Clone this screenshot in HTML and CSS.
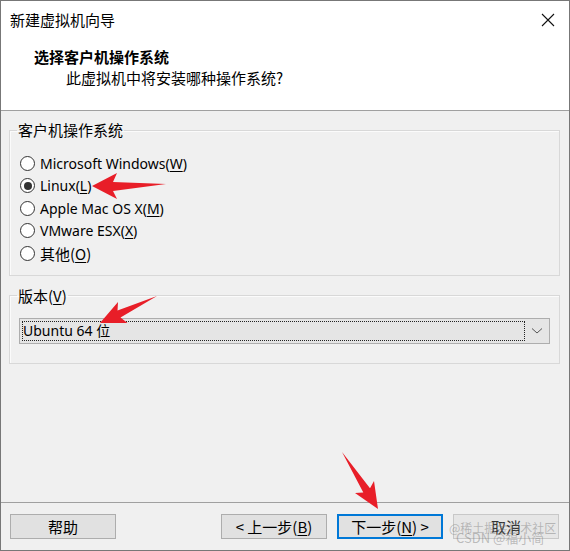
FILE: index.html
```html
<!DOCTYPE html>
<html lang="zh-CN">
<head>
<meta charset="utf-8">
<title>新建虚拟机向导</title>
<link rel="stylesheet" href="styles.css">
</head>
<body>
<div class="window">
  <div class="titlebar">
    <span class="title">新建虚拟机向导</span>
    <svg class="close" width="14" height="14" viewBox="0 0 14 14"><path d="M1 1 L13 13 M13 1 L1 13" stroke="#111" stroke-width="1.1" fill="none"/></svg>
  </div>
  <div class="header">
    <div class="h-title">选择客户机操作系统</div>
    <div class="h-sub">此虚拟机中将安装哪种操作系统?</div>
  </div>
  <div class="body">
    <fieldset class="group g1">
      <legend class="cjk">客户机操作系统</legend>
      <div class="radios">
        <div class="radio"><span class="dot"></span><span class="lat">Microsoft Windows(<u>W</u>)</span></div>
        <div class="radio"><span class="dot on"></span><span class="lat">Linux(<u>L</u>)</span></div>
        <div class="radio"><span class="dot"></span><span class="lat">Apple Mac OS X(<u>M</u>)</span></div>
        <div class="radio"><span class="dot"></span><span class="lat">VMware ESX(<u>X</u>)</span></div>
        <div class="radio"><span class="dot"></span><span class="cjk">其他(<u>O</u>)</span></div>
      </div>
    </fieldset>
    <fieldset class="group g2">
      <legend class="cjk">版本(<u>V</u>)</legend>
      <div class="select">
        <div class="sel-focus"><span class="lat">Ubuntu 64 位</span></div>
        <svg class="chev" width="12" height="8" viewBox="0 0 12 8"><path d="M1 1.5 L6 6 L11 1.5" stroke="#555" stroke-width="1" fill="none"/></svg>
      </div>
    </fieldset>
  </div>
  <div class="footer">
    <button class="btn">帮助</button>
    <div class="btn-group">
      <button class="btn">&lt; 上一步(<u>B</u>)</button>
      <button class="btn primary">下一步(<u>N</u>) &gt;</button>
      <button class="btn disabled">取消</button>
    </div>
  </div>
  <div class="wm wm1">@稀土掘金技术社区</div>
  <div class="wm wm2">CSDN @福小简</div>
  <svg class="arrows" width="570" height="551" viewBox="0 0 570 551">
    <polygon fill="#e81e28" points="92,186 117,173 113,182 166,184 113,191 117,199"/>
    <polygon fill="#e81e28" points="100,323 118,302 117.5,310.5 157,296 120.5,317.5 127.5,323"/>
    <polygon fill="#e81e28" points="378,509 355,493 363.3,492.6 342,452 370,488.2 374,481"/>
  </svg>
</div>
</body>
</html>
```

FILE: styles.css
```css
* { box-sizing: border-box; }
html, body { margin: 0; padding: 0; background: #ffffff; }
body {
  font-family: "Noto Sans", "Noto Sans CJK SC", sans-serif;
  font-size: 15px;
  color: #000;
}
.window {
  position: relative;
  width: 570px;
  height: 551px;
  border: 1px solid #777;
  display: flex;
  flex-direction: column;
  background: #f0f0f0;
  overflow: hidden;
}
.cjk, .title, .h-title, .h-sub, .btn {
  font-family: "Noto Sans CJK SC", "Noto Sans", sans-serif;
  font-size: 15px;
}
.lat {
  font-family: "Noto Sans", "Noto Sans CJK SC", sans-serif;
  font-size: 14px;
}
.titlebar {
  height: 37px;
  flex: none;
  background: #fff;
  display: flex;
  align-items: center;
  justify-content: space-between;
  padding: 0 14px 0 9px;
}
.title { line-height: 20px; }
.close { display: block; margin-top: 1px; }
.header {
  height: 73px;
  flex: none;
  background: #fff;
  border-bottom: 1px solid #a0a0a0;
  padding: 9px 0 0 33px;
}
.h-title { font-weight: 700; line-height: 20px; }
.h-sub { line-height: 20px; padding-left: 32px; margin-top: 1px; }
.body {
  flex: 1;
  padding: 9px 9px 0 8px;
  display: flex;
  flex-direction: column;
}
.group {
  margin: 0;
  border: 1px solid #d8d8d8;
  box-shadow: inset 1px 1px 0 #fbfbfb;
  padding: 0 9px 0 7px;
  min-width: 0;
}
.group legend {
  padding: 0 1px;
  line-height: 20px;
}
.g1 { padding-top: 12px; padding-bottom: 10px; }
.g2 { margin-top: 10px; padding-top: 12px; padding-bottom: 19px; }
.radio {
  height: 22.5px;
  display: flex;
  align-items: center;
  gap: 5px;
  padding-left: 3px;
}
.dot {
  width: 15px;
  height: 15px;
  border: 1px solid #333;
  border-radius: 50%;
  background: #fff;
  display: flex;
  align-items: center;
  justify-content: center;
  flex: none;
}
.dot.on::after {
  content: "";
  width: 8px;
  height: 8px;
  border-radius: 50%;
  background: #333;
}
u { text-decoration: underline; text-underline-offset: 2px; }
.select {
  margin-left: 2px;
  height: 26px;
  border: 1px solid #adadad;
  background: #e5e5e5;
  display: flex;
  align-items: center;
  padding: 2px 0 2px 2px;
}
.sel-focus {
  flex: 1;
  height: 20px;
  border: 1px dotted #222;
  display: flex;
  align-items: center;
  padding-left: 0;
}
.sel-focus .lat { line-height: 18px; }
.chev { margin: 1px 6px 0 6px; flex: none; }
.footer {
  height: 48px;
  flex: none;
  border-top: 1px solid #a0a0a0;
  display: flex;
  justify-content: space-between;
  align-items: flex-start;
  padding: 11px 10px 0 9px;
}
.btn-group { display: flex; gap: 10px; }
.btn {
  width: 106px;
  height: 25px;
  background: #e1e1e1;
  border: 1px solid #adadad;
  color: #000;
  padding: 0;
  line-height: 21px;
  margin: 0;
}
.btn.primary { border: 2px solid #0078d7; line-height: 19px; }
.btn.disabled { background: #e6e6e6; border-color: #c8c8c8; color: #333; }
.wm {
  position: absolute;
  font-family: "Noto Sans CJK SC", sans-serif;
  color: rgba(120, 120, 120, 0.45);
  white-space: nowrap;
  pointer-events: none;
}
.wm1 { left: 448px; top: 518px; font-size: 12px; }
.wm2 { left: 455px; top: 527px; font-size: 13px; }
.arrows { position: absolute; left: -1px; top: -1px; pointer-events: none; }
```
